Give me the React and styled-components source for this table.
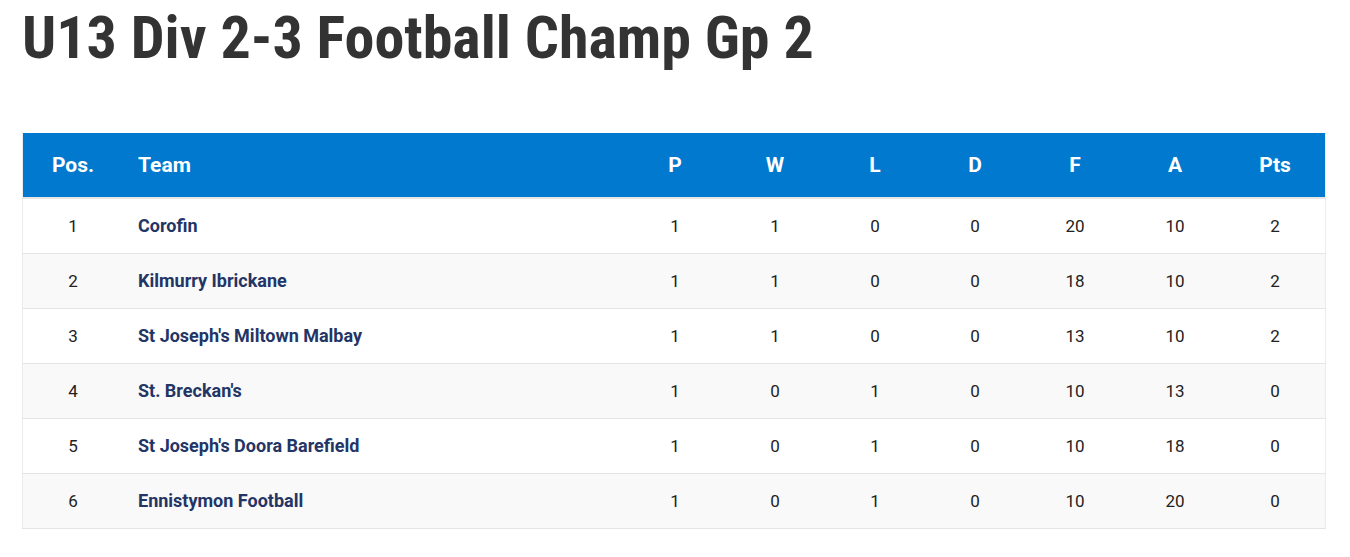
import React from "react";
import styled, { createGlobalStyle } from "styled-components";

const GlobalStyle = createGlobalStyle`
  body {
    margin: 0;
    background: #ffffff;
    font-family: Roboto, "Liberation Sans", sans-serif;
  }
`;

const Page = styled.div`
  padding: 0 24px 0 22px;
`;

const Title = styled.h1`
  margin: 0 0 57px 0;
  font-family: "Roboto Condensed", Roboto, sans-serif;
  font-size: 60px;
  line-height: 76px;
  font-weight: 700;
  color: #333333;
  white-space: nowrap;
`;

const Table = styled.table`
  width: 1304px;
  border-collapse: collapse;
  border-left: 1px solid #ececec;
  border-right: 1px solid #ececec;
`;

const HeadRow = styled.tr`
  background: #0079cf;
  height: 65px;
  border-bottom: 2px solid #e6e6e6;
`;

const Th = styled.th`
  color: #ffffff;
  font-size: 21px;
  font-weight: 700;
  text-align: ${(p) => (p.$left ? "left" : "center")};
  padding: ${(p) => (p.$left ? "0 0 0 15px" : "0")};
  width: ${(p) => p.$w}px;
`;

const Row = styled.tr`
  height: 55px;
  background: ${(p) => (p.$alt ? "#f9f9f9" : "#ffffff")};
  border-bottom: 1px solid #e5e5e5;
`;

const Td = styled.td`
  font-size: 17px;
  color: #222222;
  text-align: center;
  padding: 0;
`;

const TeamCell = styled.td`
  font-size: 18px;
  font-weight: 700;
  color: #233565;
  text-align: left;
  padding: 0 0 0 15px;
`;

const columns = ["P", "W", "L", "D", "F", "A", "Pts"];

const rows = [
  [1, "Corofin", 1, 1, 0, 0, 20, 10, 2],
  [2, "Kilmurry Ibrickane", 1, 1, 0, 0, 18, 10, 2],
  [3, "St Joseph's Miltown Malbay", 1, 1, 0, 0, 13, 10, 2],
  [4, "St. Breckan's", 1, 0, 1, 0, 10, 13, 0],
  [5, "St Joseph's Doora Barefield", 1, 0, 1, 0, 10, 18, 0],
  [6, "Ennistymon Football", 1, 0, 1, 0, 10, 20, 0],
];

export default function App() {
  return (
    <Page>
      <GlobalStyle />
      <Title>U13 Div 2-3 Football Champ Gp 2</Title>
      <Table>
        <thead>
          <HeadRow>
            <Th $w={100}>Pos.</Th>
            <Th $left>Team</Th>
            {columns.map((c) => (
              <Th key={c} $w={100}>
                {c}
              </Th>
            ))}
          </HeadRow>
        </thead>
        <tbody>
          {rows.map(([pos, team, ...stats], i) => (
            <Row key={pos} $alt={i % 2 === 1}>
              <Td>{pos}</Td>
              <TeamCell>{team}</TeamCell>
              {stats.map((s, j) => (
                <Td key={j}>{s}</Td>
              ))}
            </Row>
          ))}
        </tbody>
      </Table>
    </Page>
  );
}
